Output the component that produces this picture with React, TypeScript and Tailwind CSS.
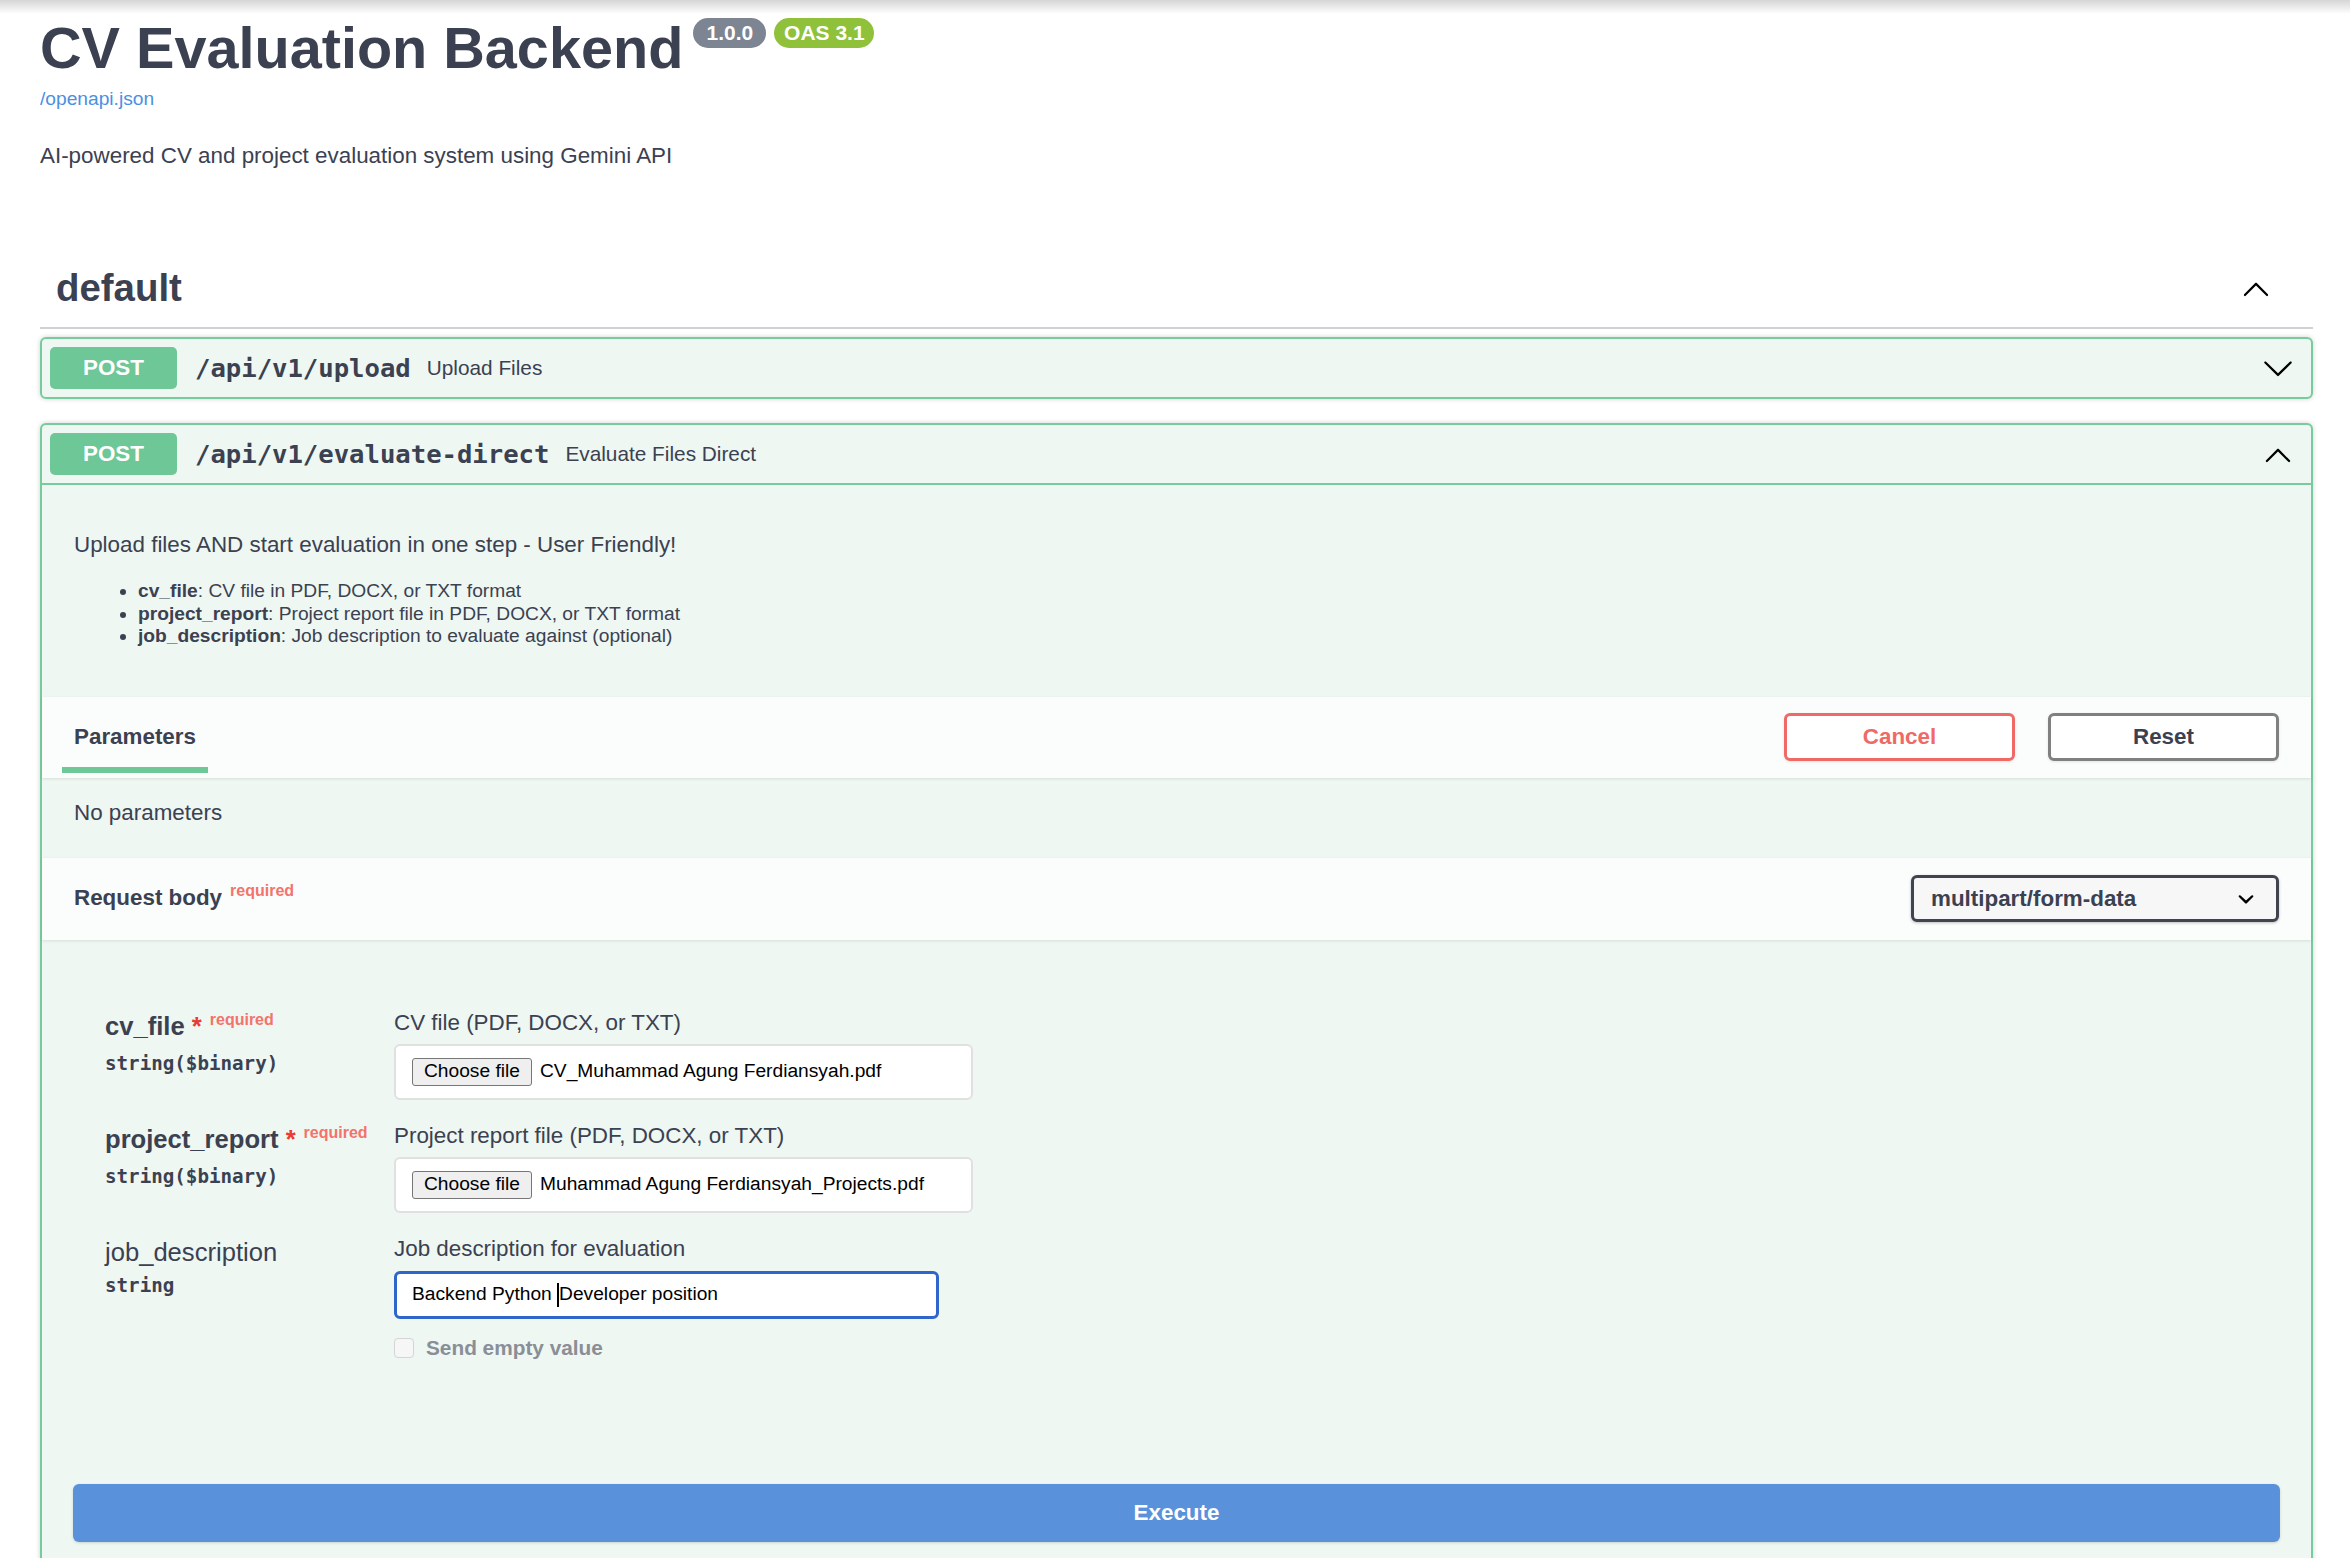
import React from 'react'

function ArrowUp({ className }: { className?: string }) {
  return (
    <svg viewBox="0 0 20 20" className={className} fill="currentColor" aria-hidden="true">
      <path d="M17.418 14.908c-.272.27-.71.27-.98 0L10 8.417l-6.438 6.49c-.27.27-.71.27-.98 0-.27-.27-.27-.716 0-.985l6.93-6.985c.27-.27.71-.27.98 0l6.93 6.985c.27.27.27.716-.004.987z" />
    </svg>
  )
}

function ArrowDown({ className }: { className?: string }) {
  return (
    <svg viewBox="0 0 20 20" className={className} fill="currentColor" aria-hidden="true">
      <path d="M17.418 6.109c.272-.268.709-.268.979 0s.271.701 0 .969l-7.908 7.83c-.27.268-.707.268-.979 0l-7.908-7.83c-.27-.268-.27-.701 0-.969.271-.268.709-.268.979 0L10 13.25l7.418-7.141z" />
    </svg>
  )
}

function SelectArrow({ className }: { className?: string }) {
  return (
    <svg viewBox="0 0 20 20" className={className} fill="currentColor" aria-hidden="true">
      <path d="M13.418 7.859a.695.695 0 0 1 .978 0 .68.68 0 0 1 0 .969l-3.908 3.83a.697.697 0 0 1-.979 0l-3.908-3.83a.68.68 0 0 1 0-.969.695.695 0 0 1 .978 0L10 11l3.418-3.141z" />
    </svg>
  )
}

function PostBadge() {
  return (
    <div className="flex h-[42px] w-[127px] shrink-0 items-center justify-center rounded-[5px] bg-[#6ec796] text-[22.4px] font-bold text-white">
      POST
    </div>
  )
}

interface FieldProps {
  name: string
  type: string
  label: string
  required?: boolean
  children: React.ReactNode
  last?: boolean
}

function Field({ name, type, label, required, children, last }: FieldProps) {
  return (
    <div className={`flex ${last ? '' : 'pb-[22px]'}`}>
      <div className="w-[289px] shrink-0 pt-[2px]">
        <div className={`text-[25.6px] leading-[30px] ${required ? 'font-bold' : ''}`}>
          {name}
          {required && (
            <>
              <span className="text-[#ec3a33]">&nbsp;*</span>
              <span className="relative top-[-10px] pl-[8px] text-[16px] font-bold text-[#f4736b]">required</span>
            </>
          )}
        </div>
        <div className="mt-[7px] font-['DejaVu_Sans_Mono',monospace] text-[19.2px] font-bold leading-[24px]">
          {type}
        </div>
      </div>
      <div>
        <div className="text-[22.4px] leading-[28px]">{label}</div>
        {children}
      </div>
    </div>
  )
}

function FileBox({ file }: { file: string }) {
  return (
    <div className="mt-[7px] flex h-[56px] w-[579px] items-center rounded-[6px] border-2 border-[#e0e0e0] bg-white pl-[16px]">
      <span className="flex h-[28px] w-[120px] items-center justify-center rounded-[3px] border border-[#767676] bg-[#efefef] text-[19.2px] text-black">
        Choose file
      </span>
      <span className="ml-[8px] text-[19.2px] text-black">{file}</span>
    </div>
  )
}

export default function App() {
  return (
    <div className="min-h-screen bg-white font-['Liberation_Sans',Helvetica,Arial,sans-serif] text-[#3b4151]">
      <div className="h-[14px] bg-linear-to-b from-[#d6d6d6] to-white" />

      <div className="pl-[40px] pr-[37px]">
        {/* Info */}
        <div className="mt-[4px] flex items-start">
          <h2 className="mt-[-3px] text-[57.6px] font-bold leading-[66px]">CV Evaluation Backend</h2>
          <span className="ml-[10px] flex h-[30px] w-[73px] items-center justify-center rounded-full bg-[#7d8492] text-[21px] font-bold text-white">
            1.0.0
          </span>
          <span className="ml-[8px] flex h-[30px] w-[100px] items-center justify-center rounded-full bg-[#8fc13a] text-[21px] font-bold text-white">
            OAS 3.1
          </span>
        </div>
        <div className="mt-[7px] text-[19.2px] leading-[22px] text-[#4a90e2]">/openapi.json</div>
        <p className="mt-[32px] text-[22.4px] leading-[28px]">AI-powered CV and project evaluation system using Gemini API</p>

        {/* Tag */}
        <div className="mt-[95px] flex items-center justify-between border-b-2 border-[#cfd1d5] pb-[16px] pl-[16px] pr-[41px]">
          <h3 className="text-[38.4px] font-bold leading-[46px]">default</h3>
          <ArrowUp className="h-[32px] w-[32px] text-black" />
        </div>

        {/* Upload */}
        <div className="mt-[8px] rounded-[6px] border-2 border-[#76cc9c] bg-[#eef7f2] shadow-[0_0_5px_rgba(0,0,0,0.19)]">
          <div className="flex items-center p-[8px]">
            <PostBadge />
            <span className="pl-[18px] pr-[16px] font-['DejaVu_Sans_Mono',monospace] text-[25.6px] font-bold">/api/v1/upload</span>
            <span className="text-[20.8px]">Upload Files</span>
            <ArrowDown className="ml-auto mr-[9px] h-[32px] w-[32px] text-black" />
          </div>
        </div>

        {/* Evaluate direct */}
        <div className="mt-[24px] rounded-[6px] border-2 border-[#76cc9c] bg-[#eef7f2] shadow-[0_0_5px_rgba(0,0,0,0.19)]">
          <div className="flex items-center border-b-2 border-[#76cc9c] p-[8px]">
            <PostBadge />
            <span className="pl-[18px] pr-[16px] font-['DejaVu_Sans_Mono',monospace] text-[25.6px] font-bold">/api/v1/evaluate-direct</span>
            <span className="text-[20.8px]">Evaluate Files Direct</span>
            <ArrowUp className="ml-auto mr-[9px] h-[32px] w-[32px] text-black" />
          </div>

          <div className="px-[32px] pb-[49px] pt-[46px]">
            <p className="text-[22.4px] leading-[28px]">Upload files AND start evaluation in one step - User Friendly!</p>
            <ul className="mt-[21px] list-disc pl-[64px] text-[19.2px] leading-[22.5px]">
              <li><strong>cv_file</strong>: CV file in PDF, DOCX, or TXT format</li>
              <li><strong>project_report</strong>: Project report file in PDF, DOCX, or TXT format</li>
              <li><strong>job_description</strong>: Job description to evaluate against (optional)</li>
            </ul>
          </div>

          {/* Parameters header */}
          <div className="relative flex h-[81px] items-center bg-[#fbfdfc] px-[32px] shadow-[0_1px_3px_rgba(0,0,0,0.1)]">
            <div className="relative text-[22.4px] font-bold leading-[28px]">
              Parameters
              <span className="absolute bottom-[-22px] left-[-12px] right-[-12px] h-[6px] bg-[#6ec796]" />
            </div>
            <div className="ml-auto flex gap-[33px]">
              <button className="h-[48px] w-[231px] rounded-[6px] border-[3px] border-[#ef6a66] bg-white text-[22.4px] font-bold text-[#ef6a66] shadow-[0_1px_3px_rgba(0,0,0,0.1)]">
                Cancel
              </button>
              <button className="h-[48px] w-[231px] rounded-[6px] border-[3px] border-[#808080] bg-white text-[22.4px] font-bold text-[#3b4151] shadow-[0_1px_3px_rgba(0,0,0,0.1)]">
                Reset
              </button>
            </div>
          </div>

          <div className="h-[80px] px-[32px] pt-[21px] text-[22.4px] leading-[28px]">No parameters</div>

          {/* Request body header */}
          <div className="relative flex h-[82px] items-center bg-[#fbfdfc] px-[32px] shadow-[0_1px_3px_rgba(0,0,0,0.1)]">
            <div className="text-[22.4px] font-bold leading-[28px]">
              Request body
              <span className="relative top-[-9px] ml-[8px] text-[16px] font-bold text-[#f4736b]">required</span>
            </div>
            <div className="ml-auto flex h-[47px] w-[368px] items-center rounded-[6px] border-[3px] border-[#41444e] bg-[#f7f7f7] pl-[17px] shadow-[0_1px_3px_rgba(0,0,0,0.25)]">
              <span className="flex-1 text-[22.4px] font-bold">multipart/form-data</span>
              <SelectArrow className="mr-[14px] h-[32px] w-[32px] text-black" />
            </div>
          </div>

          {/* Body */}
          <div className="pb-[40px] pt-[69px]">
            <div className="pl-[63px]">
              <Field name="cv_file" type="string($binary)" label="CV file (PDF, DOCX, or TXT)" required>
                <FileBox file="CV_Muhammad Agung Ferdiansyah.pdf" />
              </Field>
              <Field name="project_report" type="string($binary)" label="Project report file (PDF, DOCX, or TXT)" required>
                <FileBox file="Muhammad Agung Ferdiansyah_Projects.pdf" />
              </Field>
              <Field name="job_description" type="string" label="Job description for evaluation" last>
                <div className="mt-[8px] flex h-[48px] w-[545px] items-center rounded-[6px] border-[3px] border-[#2f66cc] bg-white pl-[15px] text-[19.2px] text-black">
                  <span className="whitespace-pre">Backend Python </span>
                  <span className="h-[24px] w-[2px] bg-black" />
                  <span>Developer position</span>
                </div>
                <div className="mt-[17px] flex h-[24px] items-center">
                  <span className="h-[20px] w-[20px] rounded-[4px] border border-[#d4d4d4] bg-[#f6f6f6]" />
                  <span className="ml-[12px] text-[20.8px] font-bold text-[#8a8e97]">Send empty value</span>
                </div>
              </Field>
            </div>
            <div className="mt-[124px] px-[31px]">
              <button className="h-[58px] w-full rounded-[6px] bg-[#5a91db] text-[22.4px] font-bold text-white shadow-[0_1px_3px_rgba(0,0,0,0.15)]">
                Execute
              </button>
            </div>
          </div>
        </div>
      </div>
    </div>
  )
}
